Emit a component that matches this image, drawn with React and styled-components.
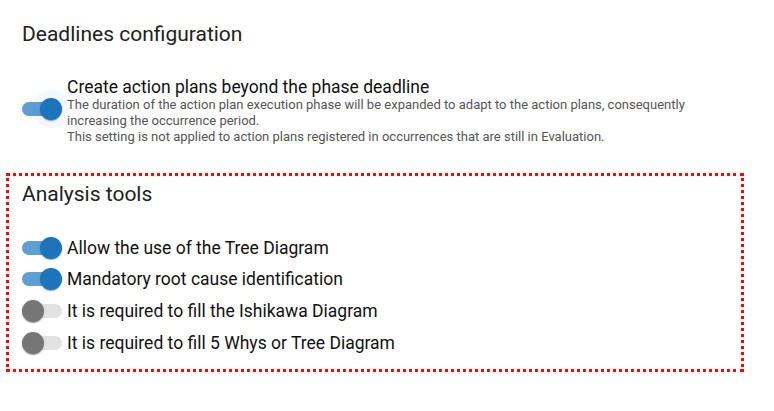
import React from "react";
import styled, { createGlobalStyle } from "styled-components";

const Global = createGlobalStyle`
  html, body { margin: 0; padding: 0; background: #fff; }
  body { font-family: Roboto, "Noto Sans", Arial, sans-serif; color: #212121; }
`;

const Page = styled.div`
  width: 774px;
  height: 411px;
  box-sizing: border-box;
  padding-top: 19px;
  overflow: hidden;
`;

const Section = styled.section`
  box-sizing: border-box;
  margin-left: 6px;
  width: 738px;
  padding: 0 0 0 13px;
  border: 3px solid transparent;
`;

const HighlightSection = styled(Section)`
  border: 3px dotted #f00;
  margin-top: 25px;
  padding-top: 6px;
  padding-bottom: 10px;
`;

const Heading = styled.h2`
  margin: 0;
  font-size: 21px;
  font-weight: 400;
  line-height: 24px;
  color: #212121;
`;

const List = styled.div`
  display: flex;
  flex-direction: column;
  margin-top: ${(p) => p.$top}px;
`;

const Row = styled.label`
  display: flex;
  align-items: center;
  min-height: 31.67px;
`;

const SwitchRoot = styled.span`
  position: relative;
  flex: 0 0 45px;
  width: 45px;
  height: 24px;
  margin-bottom: ${(p) => (p.$lift ? 5 : 0)}px;
`;

const Track = styled.span`
  position: absolute;
  left: 0;
  top: 5px;
  width: 40px;
  height: 14px;
  border-radius: 7px;
  background: ${(p) => (p.$on ? "#5d9fd3" : "#e2e2e2")};
`;

const Halo = styled.span`
  position: absolute;
  left: 10px;
  top: -7px;
  width: 38px;
  height: 38px;
  border-radius: 50%;
  background: rgba(30, 118, 188, 0.05);
`;

const Thumb = styled.span`
  position: absolute;
  top: 1px;
  left: ${(p) => (p.$on ? 18 : 0)}px;
  width: 22px;
  height: 22px;
  border-radius: 50%;
  background: ${(p) => (p.$on ? "#1c75bc" : "#767676")};
  box-shadow: 0 2px 1px -1px rgba(0, 0, 0, 0.2), 0 1px 1px 0 rgba(0, 0, 0, 0.14),
    0 1px 3px 0 rgba(0, 0, 0, 0.12);
`;

const Switch = ({ on, focus, lift }) => (
  <SwitchRoot $lift={lift}>
    <Track $on={on} />
    {focus && <Halo />}
    <Thumb $on={on} />
  </SwitchRoot>
);

const LabelText = styled.span`
  font-size: 17.5px;
  line-height: ${(p) => (p.$compact ? 20 : 22)}px;
  color: #111;
`;

const LabelBlock = styled.span`
  display: flex;
  flex-direction: column;
  max-width: 660px;
`;

const Desc = styled.span`
  font-size: 13px;
  line-height: 16px;
  color: #555;
`;

export default function App() {
  return (
    <Page>
      <Global />
      <Section>
        <Heading>Deadlines configuration</Heading>
        <List $top={31}>
          <Row>
            <Switch on focus lift />
            <LabelBlock>
              <LabelText $compact>Create action plans beyond the phase deadline</LabelText>
              <Desc>
                The duration of the action plan execution phase will be expanded to adapt to the action plans, consequently increasing the occurrence period.
              </Desc>
              <Desc>
                This setting is not applied to action plans registered in occurrences that are still in Evaluation.
              </Desc>
            </LabelBlock>
          </Row>
        </List>
      </Section>
      <HighlightSection>
        <Heading>Analysis tools</Heading>
        <List $top={26}>
          <Row>
            <Switch on />
            <LabelText>Allow the use of the Tree Diagram</LabelText>
          </Row>
          <Row>
            <Switch on />
            <LabelText>Mandatory root cause identification</LabelText>
          </Row>
          <Row>
            <Switch />
            <LabelText>It is required to fill the Ishikawa Diagram</LabelText>
          </Row>
          <Row>
            <Switch />
            <LabelText>It is required to fill 5 Whys or Tree Diagram</LabelText>
          </Row>
        </List>
      </HighlightSection>
    </Page>
  );
}
